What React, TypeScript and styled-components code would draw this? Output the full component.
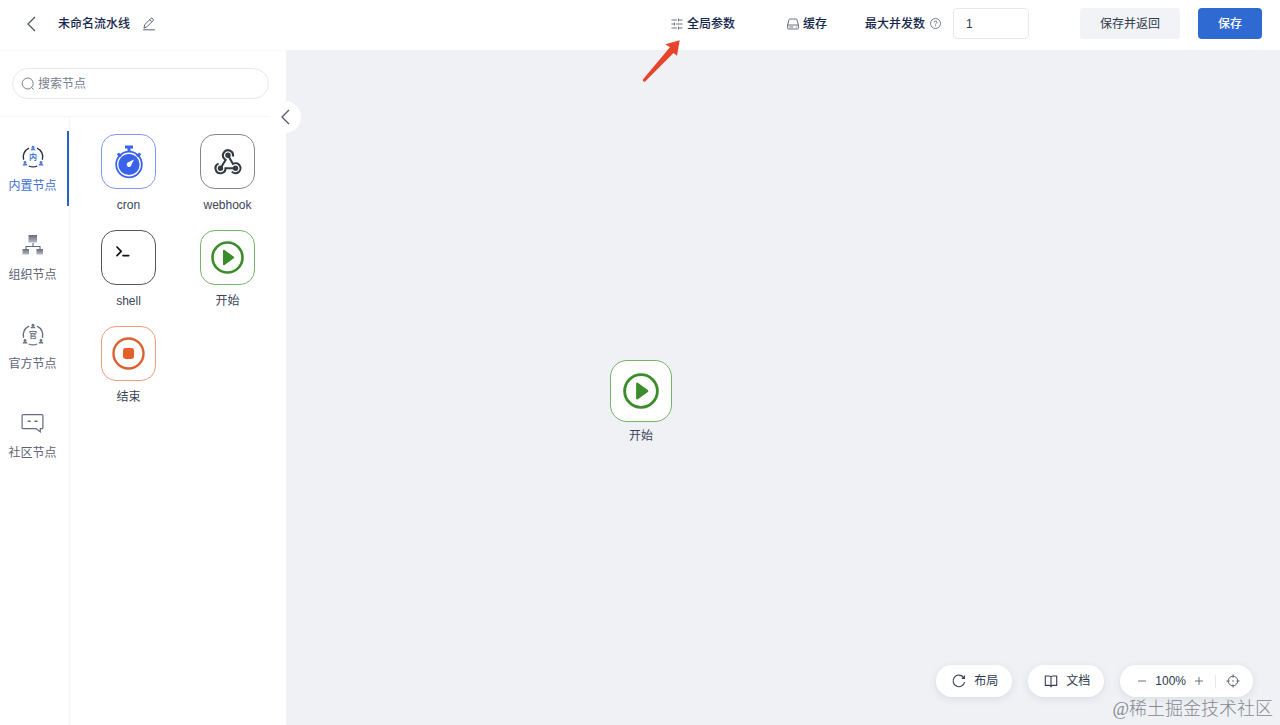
import React from "react";
import styled, { createGlobalStyle, css } from "styled-components";

const GlobalStyle = createGlobalStyle`
  *, *::before, *::after { box-sizing: border-box; }
  body {
    margin: 0;
    background: #fff;
    color: #3a4459;
    font: 400 12px/18px "Liberation Sans", "Noto Sans CJK SC", sans-serif;
  }
  button, input { font: inherit; color: inherit; }
  button { cursor: pointer; }
  svg { display: block; flex: none; }
`;

const Page = styled.div`
  display: flex;
  flex-direction: column;
  min-height: 100vh;
`;

const Header = styled.header`
  display: flex;
  align-items: center;
  justify-content: space-between;
  padding: 8px 18px 11px 24px;
  background: #fff;
`;

const HeaderGroup = styled.div`
  display: flex;
  align-items: center;
`;

const Title = styled.h1`
  margin: 0 12px 0 19px;
  font-size: 12px;
  font-weight: 500;
  color: #14264c;
`;

const PlainButton = styled.button`
  display: flex;
  align-items: center;
  gap: 4px;
  padding: 0;
  border: 0;
  background: none;
`;

const HeaderLink = styled(PlainButton)<{ $space: number }>`
  margin-right: ${(p) => p.$space}px;
  font-weight: 500;
  color: #14264c;
`;

const LimitLabel = styled.label`
  display: flex;
  align-items: center;
  gap: 4px;
  font-weight: 500;
  color: #14264c;
`;

const LimitInput = styled.input`
  width: 76px;
  height: 31px;
  margin: 0 51px 0 11px;
  padding: 0 12px;
  border: 1px solid #e6e9ef;
  border-radius: 4px;
  background: #fff;
  color: #2f394d;
`;

const ActionButton = styled.button<{ $primary?: boolean }>`
  height: 31px;
  padding: 0 20px;
  border: 0;
  border-radius: 3px;
  background: #f1f3f6;
  color: #2f394d;
  ${(p) =>
    p.$primary &&
    css`
      margin-left: 18px;
      border-radius: 4px;
      background: #2f69d2;
      color: #fff;
      font-weight: 500;
    `}
`;

const Body = styled.div`
  display: flex;
  flex: 1;
`;

const Sidebar = styled.aside`
  position: relative;
  z-index: 1;
  display: flex;
  flex-direction: column;
  flex: none;
  width: 286px;
  background: #fff;
  border-top: 1px solid #fafafc;
`;

const SearchArea = styled.div`
  padding: 17px 17px 17px 12px;
  border-bottom: 1px solid #f4f5f7;
`;

const SearchBox = styled.label`
  display: flex;
  align-items: center;
  gap: 3px;
  height: 31px;
  padding: 0 8px;
  border: 1px solid #e6e8ec;
  border-radius: 16px;
`;

const SearchInput = styled.input`
  flex: 1;
  min-width: 0;
  padding: 0;
  border: 0;
  outline: 0;
  background: none;
  &::placeholder { color: #757d8d; opacity: 1; }
`;

const CollapseButton = styled.button`
  position: absolute;
  top: 50px;
  right: -15px;
  display: grid;
  place-items: center;
  width: 32px;
  height: 32px;
  padding: 0;
  border: 0;
  border-radius: 50%;
  background: #fff;
`;

const Library = styled.div`
  display: flex;
  flex: 1;
`;

const Tabs = styled.nav`
  display: flex;
  flex-direction: column;
  gap: 14px;
  width: 70px;
  padding-top: 14px;
  border-right: 1px solid #f6f7f9;
`;

const Tab = styled.button<{ $active?: boolean }>`
  display: flex;
  flex-direction: column;
  align-items: center;
  gap: 8px;
  height: 75px;
  padding: 14px 2px 0 0;
  border: 0;
  border-right: 2px solid ${(p) => (p.$active ? "#2b62c9" : "transparent")};
  background: none;
  color: ${(p) => (p.$active ? "#3c70d2" : "#5b6274")};
`;

const NodeGrid = styled.ul`
  display: grid;
  grid-template-columns: 55px 55px;
  align-content: start;
  gap: 16px 44px;
  margin: 0;
  padding: 17px 0 0 31px;
  list-style: none;
`;

const NodeItem = styled.li`
  display: flex;
  flex-direction: column;
  align-items: center;
  gap: 7px;
`;

const Tile = styled.div<{ $border: string; $large?: boolean }>`
  display: grid;
  place-items: center;
  width: ${(p) => (p.$large ? 62 : 55)}px;
  height: ${(p) => (p.$large ? 62 : 55)}px;
  border: 1px solid ${(p) => p.$border};
  border-radius: ${(p) => (p.$large ? 17 : 15)}px;
  background: #fff;
`;

const Canvas = styled.main`
  position: relative;
  display: flex;
  flex: 1;
  align-items: flex-end;
  justify-content: flex-end;
  padding: 0 27px 28px 0;
  background: #eff1f5;
`;

const PlacedNode = styled.div`
  position: absolute;
  left: 324px;
  top: 310px;
  display: flex;
  flex-direction: column;
  align-items: center;
  gap: 5px;
`;

const Pointer = styled.svg`
  position: absolute;
  left: 354px;
  top: -14px;
`;

const Tools = styled.div`
  display: flex;
  gap: 16px;
`;

const pill = css`
  display: flex;
  align-items: center;
  height: 32px;
  border: 0;
  border-radius: 16px;
  background: #fff;
  color: #2f394d;
  box-shadow: 0 2px 8px rgba(40, 50, 80, 0.1);
`;

const PillButton = styled.button`
  ${pill}
  gap: 8px;
  padding: 0 14px 0 16px;
`;

const ZoomBar = styled.div`
  ${pill}
  gap: 7px;
  padding: 0 13px 0 16px;
`;

const Divider = styled.span`
  width: 1px;
  height: 13px;
  margin: 0 3px;
  background: #e6e8ec;
`;

const Watermark = styled.span`
  position: absolute;
  right: 7px;
  bottom: 3px;
  font: 300 18px/26px "Liberation Serif", "Noto Sans CJK SC", serif;
  color: #85888f;
`;

const Chevron = () => (
  <svg width="15" height="16" viewBox="0 0 15 16" fill="none" stroke="#505869" strokeWidth="1.3">
    <path d="M11 1 4 8l7 7" />
  </svg>
);

const EditIcon = () => (
  <svg width="14" height="14" viewBox="0 0 14 14" fill="none" stroke="#596173" strokeWidth="1">
    <path d="M2 11 2.7 7.7 8.8 1.6Q9.8.7 10.8 1.7T10.9 3.8L4.8 9.9ZM7.8 2.7l2 2M1.2 12.8H13" />
  </svg>
);

const ParamsIcon = () => (
  <svg width="12" height="12" viewBox="0 0 12 12" fill="none" stroke="#596173" strokeWidth=".9">
    <path d="M.5 2H6M8 2h3.5M.5 6H3M5 6h6.5M.5 10H6M8 10h3.5M7.5 .5v3M3.5 4.5v3M7.5 8.5v3" />
  </svg>
);

const CacheIcon = () => (
  <svg width="12" height="12" viewBox="0 0 12 12" fill="none" stroke="#596173" strokeWidth=".9">
    <path d="M.6 7 2 1.8Q2.2 1 3 1h6q.8 0 1 .8L11.4 7v3.3q0 .7-.7.7H1.3q-.7 0-.7-.7ZM.6 7h10.8M2.3 9h4M8.7 9h1" />
  </svg>
);

const HelpIcon = () => (
  <svg width="13" height="13" viewBox="0 0 13 13" fill="none" stroke="#697080" strokeWidth=".9">
    <circle cx="6.5" cy="6.5" r="5" />
    <path d="M5 5.4Q5 4 6.5 4T8 5.3Q8 6 7.2 6.4T6.5 7.5M6.5 8.3v1" />
  </svg>
);

const SearchIcon = () => (
  <svg width="14" height="14" viewBox="0 0 14 14" fill="none" stroke="#757d8d" strokeWidth="1">
    <circle cx="6.7" cy="6.5" r="5.5" />
    <path d="m10.6 10.5 2.2 2.2" />
  </svg>
);

const RingIcon = ({ active, glyph }: { active?: boolean; glyph: string }) => {
  const accent = active ? "#4a7bdc" : "#6c7385";
  return (
    <svg width="24" height="24" viewBox="0 0 24 24" fill="none">
      <path
        d="M8 3.1A9.8 9.8 0 0 0 2.6 14.7M16 3.1a9.8 9.8 0 0 1 5.4 11.6M7.8 21a10 10 0 0 0 8.4 0"
        stroke={active ? "#252d3d" : "#626a7e"}
        strokeWidth="1.3"
      />
      <g fill={accent}>
        <circle cx="12" cy="2.2" r="1.4" />
        <path d="M9.5 5.2q0-2 2.5-2t2.5 2Z" />
        <circle cx="4" cy="17.5" r="1.4" />
        <path d="M1.5 20.5q0-2 2.5-2t2.5 2Z" />
        <circle cx="20" cy="17.5" r="1.4" />
        <path d="M17.5 20.5q0-2 2.5-2t2.5 2Z" />
      </g>
      <text x="12" y="15.4" textAnchor="middle" fontSize="8" fontWeight="700" fill={accent} fontFamily="Noto Sans CJK SC, sans-serif">
        {glyph}
      </text>
    </svg>
  );
};

const OrgIcon = () => (
  <svg width="24" height="24" viewBox="0 0 24 24" fill="none">
    <defs>
      <linearGradient id="block" x1="0" y1="0" x2="0" y2="1">
        <stop offset="0" stopColor="#666c7b" />
        <stop offset="1" stopColor="#b5b9c2" />
      </linearGradient>
    </defs>
    <path d="M12 9v3.5M5 16v-3.5h14V16" stroke="#62697a" strokeWidth="1.1" />
    <g fill="url(#block)">
      <rect x="7.5" y="1" width="8.5" height="7.5" />
      <rect x="1.5" y="15" width="6.5" height="5.5" />
      <rect x="15.5" y="15" width="6.5" height="5.5" />
    </g>
  </svg>
);

const ChatIcon = () => (
  <svg width="24" height="24" viewBox="0 0 24 24" fill="none" stroke="#646b80" strokeWidth="1.2">
    <path d="M2.1 2.6h18.8q1 0 1 1v12.1q0 1-1 1h-1.6v3.2l-4.2-3.2h-13q-1 0-1-1V3.6q0-1 1-1Z" />
    <path d="M6.7 9.2h3M13.5 9.2h3" strokeWidth="1.5" />
  </svg>
);

const CronIcon = () => (
  <svg width="34" height="36" viewBox="0 0 34 36" fill="none">
    <path d="M13 3h8M17 3v5M5.8 9.5l3 3M28.2 9.5l-3 3" stroke="#3964ea" strokeWidth="3" />
    <circle cx="17" cy="20.5" r="12.8" stroke="#3964ea" strokeWidth="1.8" />
    <circle cx="17" cy="20.5" r="10.6" fill="#3964ea" />
    <path d="M22 15.6 18.8 22.2a2.4 2.4 0 1 1-3.4-3.4Z" fill="#fff" />
  </svg>
);

const WebhookIcon = () => (
  <svg width="28" height="28" viewBox="0 0 28 28" fill="none" stroke="#343c42" strokeWidth="2.1">
    <path d="M18.8 8.6A5 5 0 1 0 10.6 11l1 1L6.5 20.2" />
    <path d="M4.6 15.6A5 5 0 1 0 11.5 20.2H21.5" />
    <path d="M14 7.2 18.9 15.9A5 5 0 1 1 17.8 23.6" />
    <g fill="#343c42" stroke="none">
      <circle cx="14" cy="7.2" r="2.7" />
      <circle cx="6.5" cy="20.2" r="2.7" />
      <circle cx="21.5" cy="20.2" r="2.7" />
    </g>
  </svg>
);

const ShellIcon = () => (
  <svg width="32" height="32" viewBox="0 0 32 32" fill="none" stroke="#111" strokeWidth="1.7" strokeLinecap="round" strokeLinejoin="round">
    <path d="m4 5 4.2 4.3L4 13.6M10 13.6h5.7" />
  </svg>
);

const StartIcon = ({ size = 33 }: { size?: number }) => (
  <svg width={size} height={size} viewBox="0 0 33 33" fill="none">
    <circle cx="16.5" cy="16.5" r="15" stroke="#3b8d2a" strokeWidth="2.6" />
    <path d="M13 9.7 22.2 16.5 13 23.3Z" fill="#3b8d2a" stroke="#3b8d2a" strokeWidth="2" strokeLinejoin="round" />
  </svg>
);

const EndIcon = () => (
  <svg width="33" height="33" viewBox="0 0 33 33" fill="none">
    <circle cx="16.5" cy="16.5" r="15" stroke="#dc6132" strokeWidth="2.4" />
    <rect x="11" y="11" width="11" height="11" rx="2.4" fill="#e65f2b" />
  </svg>
);

const LayoutIcon = () => (
  <svg width="14" height="14" viewBox="0 0 14 14" fill="none" stroke="#343d50" strokeWidth="1.1">
    <path d="M11.7 3.6A5.8 5.8 0 1 0 12.6 8M12.4 1.6v2.8H9.7" />
  </svg>
);

const DocsIcon = () => (
  <svg width="14" height="14" viewBox="0 0 14 14" fill="none" stroke="#343d50" strokeWidth="1.1">
    <path d="M7 3.2Q6.6 2 5 2H1.3v9.4H5q1.5 0 2 1 .5-1 2-1h3.7V2H9Q7.4 2 7 3.2Zm0 0v9.2" />
  </svg>
);

const MinusIcon = () => (
  <svg width="12" height="12" viewBox="0 0 12 12" stroke="#6b7280">
    <path d="M2 6h8" />
  </svg>
);

const PlusIcon = () => (
  <svg width="12" height="12" viewBox="0 0 12 12" stroke="#6b7280">
    <path d="M2 6h8M6 2v8" />
  </svg>
);

const TargetIcon = () => (
  <svg width="14" height="14" viewBox="0 0 14 14" fill="none" stroke="#596173" strokeWidth="1">
    <circle cx="7" cy="7" r="4.8" />
    <path d="M7 .5v3M7 10.5v3M.5 7h3M10.5 7h3" />
    <circle cx="7" cy="7" r=".8" fill="#596173" stroke="none" />
  </svg>
);

const tabs = [
  { label: "内置节点", icon: <RingIcon active glyph="内" />, active: true },
  { label: "组织节点", icon: <OrgIcon /> },
  { label: "官方节点", icon: <RingIcon glyph="官" /> },
  { label: "社区节点", icon: <ChatIcon /> },
];

const nodes = [
  { label: "cron", border: "#8298f0", icon: <CronIcon /> },
  { label: "webhook", border: "#83878c", icon: <WebhookIcon /> },
  { label: "shell", border: "#53565b", icon: <ShellIcon /> },
  { label: "开始", border: "#75b36a", icon: <StartIcon /> },
  { label: "结束", border: "#ef9c80", icon: <EndIcon /> },
];

export default function App() {
  return (
    <Page>
      <GlobalStyle />
      <Header>
        <HeaderGroup>
          <PlainButton aria-label="返回"><Chevron /></PlainButton>
          <Title>未命名流水线</Title>
          <PlainButton aria-label="编辑名称"><EditIcon /></PlainButton>
        </HeaderGroup>
        <HeaderGroup>
          <HeaderLink $space={52}><ParamsIcon />全局参数</HeaderLink>
          <HeaderLink $space={38}><CacheIcon />缓存</HeaderLink>
          <LimitLabel htmlFor="limit">最大并发数<HelpIcon /></LimitLabel>
          <LimitInput id="limit" defaultValue="1" />
          <ActionButton>保存并返回</ActionButton>
          <ActionButton $primary>保存</ActionButton>
        </HeaderGroup>
      </Header>
      <Body>
        <Sidebar>
          <SearchArea>
            <SearchBox>
              <SearchIcon />
              <SearchInput aria-label="搜索节点" placeholder="搜索节点" />
            </SearchBox>
          </SearchArea>
          <CollapseButton aria-label="收起"><Chevron /></CollapseButton>
          <Library>
            <Tabs>
              {tabs.map((t) => (
                <Tab key={t.label} $active={t.active}>{t.icon}{t.label}</Tab>
              ))}
            </Tabs>
            <NodeGrid>
              {nodes.map((n) => (
                <NodeItem key={n.label}>
                  <Tile $border={n.border}>{n.icon}</Tile>
                  {n.label}
                </NodeItem>
              ))}
            </NodeGrid>
          </Library>
        </Sidebar>
        <Canvas>
          <Pointer width="44" height="48" viewBox="0 0 44 48">
            <path d="M39.7 4.3 25.3 8.3l4.6 3L2.7 43.7q.2 2.4 2.2 2L33.5 16.9l3.5 2.8Z" fill="#e7452b" />
          </Pointer>
          <PlacedNode>
            <Tile $border="#75b36a" $large><StartIcon size={36} /></Tile>
            开始
          </PlacedNode>
          <Tools>
            <PillButton><LayoutIcon />布局</PillButton>
            <PillButton><DocsIcon />文档</PillButton>
            <ZoomBar>
              <PlainButton aria-label="缩小"><MinusIcon /></PlainButton>
              100%
              <PlainButton aria-label="放大"><PlusIcon /></PlainButton>
              <Divider />
              <PlainButton aria-label="居中"><TargetIcon /></PlainButton>
            </ZoomBar>
          </Tools>
          <Watermark>@稀土掘金技术社区</Watermark>
        </Canvas>
      </Body>
    </Page>
  );
}
